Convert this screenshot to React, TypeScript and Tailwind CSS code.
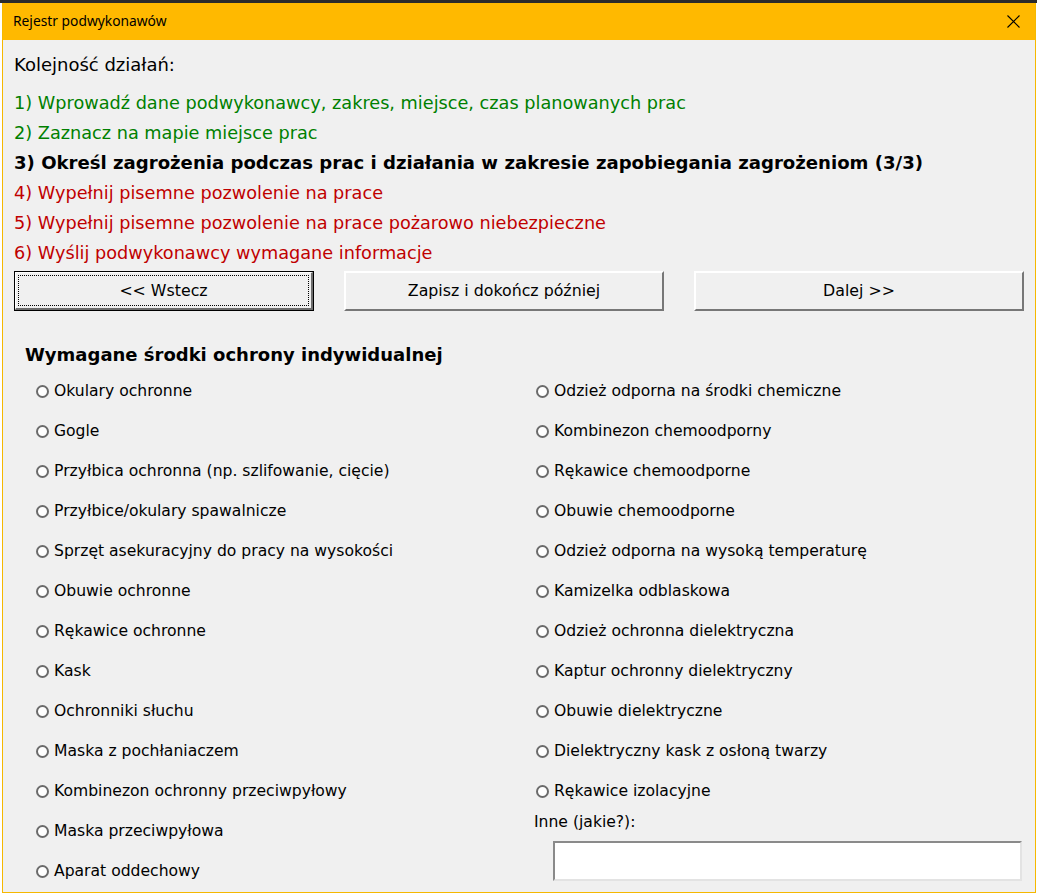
import React from "react";

const left = [
  "Okulary ochronne",
  "Gogle",
  "Przyłbica ochronna (np. szlifowanie, cięcie)",
  "Przyłbice/okulary spawalnicze",
  "Sprzęt asekuracyjny do pracy na wysokości",
  "Obuwie ochronne",
  "Rękawice ochronne",
  "Kask",
  "Ochronniki słuchu",
  "Maska z pochłaniaczem",
  "Kombinezon ochronny przeciwpyłowy",
  "Maska przeciwpyłowa",
  "Aparat oddechowy",
];

const right = [
  "Odzież odporna na środki chemiczne",
  "Kombinezon chemoodporny",
  "Rękawice chemoodporne",
  "Obuwie chemoodporne",
  "Odzież odporna na wysoką temperaturę",
  "Kamizelka odblaskowa",
  "Odzież ochronna dielektryczna",
  "Kaptur ochronny dielektryczny",
  "Obuwie dielektryczne",
  "Dielektryczny kask z osłoną twarzy",
  "Rękawice izolacyjne",
];

function Radio({ label }: { label: string }) {
  return (
    <div className="h-[40px] flex items-center pt-[2px]">
      <span className="w-[13px] h-[13px] rounded-full border-2 border-[#6b6b6b] bg-white shrink-0 -mt-[1px]" />
      <span className="ml-[5px] text-[15.6px] text-black whitespace-nowrap">{label}</span>
    </div>
  );
}

export default function App() {
  return (
    <div
      className="w-[1037px] h-[895px] bg-white relative overflow-hidden"
      style={{ fontFamily: '"DejaVu Sans", sans-serif' }}
    >
      <div className="h-[3px] bg-[#2b2b2b]" />
      <div className="ml-[2px] w-[1034px] h-[890px] border border-t-0 border-[#f5b800] bg-[#f0f0f0] flex flex-col">
        {/* title bar */}
        <div className="h-[37px] bg-[#ffb900] flex items-center justify-between pl-[10px] pr-[14px]">
          <span className="text-[13.8px] text-black" style={{ fontFamily: '"Noto Sans", sans-serif' }}>
            Rejestr podwykonawów
          </span>
          <svg width="13" height="13" viewBox="0 0 13 13" className="mr-[1px]">
            <path d="M0.5 0.5 L12.5 12.5 M12.5 0.5 L0.5 12.5" stroke="#000" strokeWidth="1.1" fill="none" />
          </svg>
        </div>
        {/* steps */}
        <div className="pl-[11px] pt-[9px] flex flex-col">
          <div className="h-[30px] flex items-center text-[18px] text-black">Kolejność działań:</div>
          <div className="mt-[9px] flex flex-col text-[17.7px]">
            <div className="h-[30px] flex items-center text-[#008000]">
              1) Wprowadź dane podwykonawcy, zakres, miejsce, czas planowanych prac
            </div>
            <div className="h-[30px] flex items-center text-[#008000]">2) Zaznacz na mapie miejsce prac</div>
            <div className="h-[30px] flex items-center text-black font-bold text-[18.1px]">
              3) Określ zagrożenia podczas prac i działania w zakresie zapobiegania zagrożeniom (3/3)
            </div>
            <div className="h-[30px] flex items-center text-[#c00000]">4) Wypełnij pisemne pozwolenie na prace</div>
            <div className="h-[30px] flex items-center text-[#c00000]">
              5) Wypełnij pisemne pozwolenie na prace pożarowo niebezpieczne
            </div>
            <div className="h-[30px] flex items-center text-[#c00000]">6) Wyślij podwykonawcy wymagane informacje</div>
          </div>
          {/* buttons */}
          <div className="mt-[3px] flex gap-[30px] text-[15.8px] text-black">
            <div className="w-[300px] h-[40px] border border-black">
              <div className="w-full h-full border-t border-l border-white border-r-2 border-b-2 border-r-[#6d6d6d] border-b-[#6d6d6d] flex items-center justify-center p-[2px]">
                <div className="w-full h-full border border-dotted border-black flex items-center justify-center">
                  &lt;&lt; Wstecz
                </div>
              </div>
            </div>
            <div className="w-[320px] h-[40px] border-t-2 border-l-2 border-white border-r-2 border-b-2 border-r-[#777] border-b-[#777] flex items-center justify-center">
              Zapisz i dokończ później
            </div>
            <div className="w-[330px] h-[40px] border-t-2 border-l-2 border-white border-r-2 border-b-2 border-r-[#777] border-b-[#777] flex items-center justify-center">
              Dalej &gt;&gt;
            </div>
          </div>
        </div>
        {/* PPE */}
        <div className="pl-[22px] mt-[28px] h-[30px] flex items-center text-[18px] font-bold text-black">
          Wymagane środki ochrony indywidualnej
        </div>
        <div className="mt-[2px] pl-[33px] flex">
          <div className="w-[500px] flex flex-col">
            {left.map((l) => (
              <Radio key={l} label={l} />
            ))}
          </div>
          <div className="flex flex-col">
            {right.map((l) => (
              <Radio key={l} label={l} />
            ))}
            <div className="h-[24px] flex items-center -ml-[2px] text-[15.6px] text-black">Inne (jakie?):</div>
            <div className="mt-[6px] ml-[17px] w-[469px] h-[40px] bg-white border-t-2 border-l-2 border-[#8a8a8a] border-r-2 border-b-2 border-r-[#e3e3e3] border-b-[#e3e3e3]" />
          </div>
        </div>
      </div>
    </div>
  );
}
